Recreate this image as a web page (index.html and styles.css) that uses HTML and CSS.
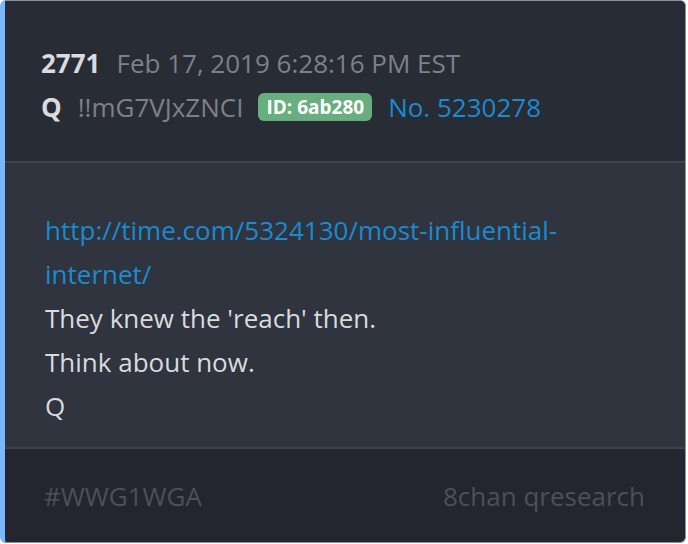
FILE: index.html
```html
<!DOCTYPE html>
<html>
<head>
<meta charset="utf-8">
<link rel="stylesheet" href="styles.css">
</head>
<body>
<div class="card">
  <div class="head">
    <div class="line">
      <span class="num">2771</span>
      <span class="date">Feb 17, 2019 6:28:16 PM EST</span>
    </div>
    <div class="line">
      <span class="num">Q</span>
      <span class="trip">!!mG7VJxZNCI</span>
      <span class="badge">ID: 6ab280</span>
      <span class="postno">No. 5230278</span>
    </div>
  </div>
  <div class="body">
    <a class="link" href="#">http://time.com/5324130/most-influential-internet/</a>
    <p>They knew the 'reach' then.</p>
    <p>Think about now.</p>
    <p>Q</p>
  </div>
  <div class="foot">
    <span>#WWG1WGA</span>
    <span>8chan qresearch</span>
  </div>
</div>
</body>
</html>
```
FILE: styles.css
```css
html, body {
  margin: 0;
  padding: 0;
  background: #ffffff;
}
body {
  font-family: "Open Sans", "DejaVu Sans", sans-serif;
}
.card {
  width: 686px;
  height: 543px;
  box-sizing: border-box;
  border: 1px solid #8d929b;
  border-left: 5px solid #79b8ff;
  border-radius: 6px;
  overflow: hidden;
  display: flex;
  flex-direction: column;
  background: #23262e;
}
.head {
  background: #282c34;
  padding: 40px 36px 32px 36px;
  border-bottom: 2px solid #3d424b;
}
.line {
  display: flex;
  align-items: center;
  height: 44px;
  font-size: 26px;
}
.num {
  color: #d9dbdf;
  font-weight: 700;
  margin-right: 16px;
}
.date, .trip {
  color: #7c818c;
}
.trip { margin-right: 15px; }
.badge {
  background: #69ae7e;
  color: #ffffff;
  font-weight: 700;
  font-size: 19px;
  border-radius: 6px;
  padding: 1px 8px 1px 8px;
  line-height: 26px;
  margin-right: 16px;
}
.postno { color: #1a8bd0; }
.body {
  background: #2f343e;
  padding: 45px 40px 19px 40px;
  border-bottom: 2px solid #3d424b;
  font-size: 26px;
  line-height: 44px;
  color: #d8dbdf;
}
.link {
  color: #1a8bd0;
  text-decoration: none;
  display: block;
}
.body p { margin: 0; }
.foot {
  flex: 1;
  display: flex;
  justify-content: space-between;
  align-items: center;
  padding: 0 40px 0 39px;
  font-size: 26px;
  color: #4b505a;
}
```
